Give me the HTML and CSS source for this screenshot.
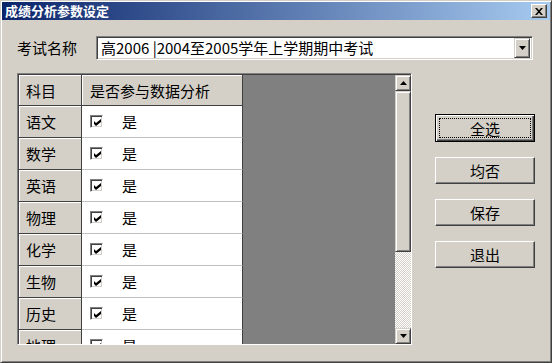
FILE: index.html
```html
<!DOCTYPE html>
<html lang="zh-CN">
<head>
<meta charset="utf-8">
<title>成绩分析参数设定</title>
<link rel="stylesheet" href="styles.css">
</head>
<body>
<div class="window">
  <div class="titlebar">
    <span class="title">成绩分析参数设定</span>
    <span class="close">
      <svg width="8" height="7" viewBox="0 0 8 7"><path d="M0 0h2l2 2.2L6 0h2L5 3.5 8 7H6L4 4.8 2 7H0l3-3.5z" fill="#000"/></svg>
    </span>
  </div>
  <div class="content">
    <div class="exam-row">
      <span class="label">考试名称</span>
      <div class="combo">
        <span class="combo-text">高2006 |2004至2005学年上学期期中考试</span>
        <span class="combo-btn"><svg width="7" height="4" viewBox="0 0 7 4"><path d="M0 0h7L3.5 4z" fill="#000"/></svg></span>
      </div>
    </div>
    <div class="main">
      <div class="grid">
        <div class="table">
          <div class="row head"><div class="c1">科目</div><div class="c2">是否参与数据分析</div></div>
          <div class="row"><div class="c1">语文</div><div class="c2"><span class="chk"><svg width="7" height="7" viewBox="0 0 7 7"><path d="M0 2l2 2 5-4v3L2 7 0 5z" fill="#000"/></svg></span><span class="yes">是</span></div></div>
          <div class="row"><div class="c1">数学</div><div class="c2"><span class="chk"><svg width="7" height="7" viewBox="0 0 7 7"><path d="M0 2l2 2 5-4v3L2 7 0 5z" fill="#000"/></svg></span><span class="yes">是</span></div></div>
          <div class="row"><div class="c1">英语</div><div class="c2"><span class="chk"><svg width="7" height="7" viewBox="0 0 7 7"><path d="M0 2l2 2 5-4v3L2 7 0 5z" fill="#000"/></svg></span><span class="yes">是</span></div></div>
          <div class="row"><div class="c1">物理</div><div class="c2"><span class="chk"><svg width="7" height="7" viewBox="0 0 7 7"><path d="M0 2l2 2 5-4v3L2 7 0 5z" fill="#000"/></svg></span><span class="yes">是</span></div></div>
          <div class="row"><div class="c1">化学</div><div class="c2"><span class="chk"><svg width="7" height="7" viewBox="0 0 7 7"><path d="M0 2l2 2 5-4v3L2 7 0 5z" fill="#000"/></svg></span><span class="yes">是</span></div></div>
          <div class="row"><div class="c1">生物</div><div class="c2"><span class="chk"><svg width="7" height="7" viewBox="0 0 7 7"><path d="M0 2l2 2 5-4v3L2 7 0 5z" fill="#000"/></svg></span><span class="yes">是</span></div></div>
          <div class="row"><div class="c1">历史</div><div class="c2"><span class="chk"><svg width="7" height="7" viewBox="0 0 7 7"><path d="M0 2l2 2 5-4v3L2 7 0 5z" fill="#000"/></svg></span><span class="yes">是</span></div></div>
          <div class="row"><div class="c1">地理</div><div class="c2"><span class="chk"><svg width="7" height="7" viewBox="0 0 7 7"><path d="M0 2l2 2 5-4v3L2 7 0 5z" fill="#000"/></svg></span><span class="yes">是</span></div></div>
        </div>
        <div class="empty"></div>
        <div class="vscroll">
          <span class="sbtn"><svg width="7" height="4" viewBox="0 0 7 4"><path d="M3.5 0L7 4H0z" fill="#000"/></svg></span>
          <span class="thumb"></span>
          <span class="track"></span>
          <span class="sbtn"><svg width="7" height="4" viewBox="0 0 7 4"><path d="M0 0h7L3.5 4z" fill="#000"/></svg></span>
        </div>
      </div>
      <div class="buttons">
        <button class="btn default"><span class="focus">全选</span></button>
        <button class="btn">均否</button>
        <button class="btn">保存</button>
        <button class="btn">退出</button>
      </div>
    </div>
  </div>
</div>
</body>
</html>
```

FILE: styles.css
```css
* { box-sizing: border-box; }
html, body { margin: 0; padding: 0; }
body {
  width: 552px;
  height: 363px;
  overflow: hidden;
  background: #d4d0c8;
  font-family: "Noto Sans CJK SC", "Liberation Sans", sans-serif;
  color: #000;
}
.window {
  width: 552px;
  height: 363px;
  background: #d4d0c8;
  border: 1px solid;
  border-color: #d4d0c8 #404040 #404040 #d4d0c8;
  box-shadow: inset 1px 1px #fff, inset -1px -1px #808080;
  padding: 1px;
  display: flex;
  flex-direction: column;
}
.titlebar {
  height: 18px;
  background: linear-gradient(to right, #0a246a, #a6caf0);
  display: flex;
  align-items: center;
  justify-content: space-between;
  padding: 0 3px 0 3px;
}
.title {
  color: #fff;
  font-weight: bold;
  font-size: 13px;
  line-height: 18px;
}
.close {
  width: 16px;
  height: 14px;
  background: #d4d0c8;
  border: 1px solid;
  border-color: #fff #404040 #404040 #fff;
  box-shadow: inset -1px -1px #808080;
  display: flex;
  align-items: center;
  justify-content: center;
  padding-right: 1px;
}
.close svg { display: block; }
.content {
  padding: 16px 0 0 15px;
}
.exam-row {
  display: flex;
  align-items: center;
  height: 24px;
}
.label {
  width: 79px;
  font-size: 15px;
  line-height: 24px;
}
.combo {
  width: 437px;
  height: 24px;
  background: #fff;
  border: 1px solid;
  border-color: #808080 #fff #fff #808080;
  box-shadow: inset 1px 1px #404040, inset -1px -1px #d4d0c8;
  padding: 2px;
  display: flex;
  align-items: center;
}
.combo-text {
  flex: 1;
  font-size: 15px;
  line-height: 20px;
  padding-left: 2px;
  white-space: nowrap;
}
.combo-btn {
  width: 16px;
  height: 20px;
  background: #d4d0c8;
  border: 1px solid;
  border-color: #d4d0c8 #404040 #404040 #d4d0c8;
  box-shadow: inset 1px 1px #fff, inset -1px -1px #808080;
  display: flex;
  align-items: center;
  justify-content: center;
}
.combo-btn svg, .sbtn svg, .chk svg { display: block; }
.main {
  display: flex;
  margin-top: 13px;
  gap: 23px;
}
.grid {
  width: 395px;
  height: 272px;
  border: 1px solid;
  border-color: #808080 #fff #fff #808080;
  box-shadow: inset 1px 1px #404040;
  padding: 1px 0 0 1px;
  display: flex;
  overflow: hidden;
}
.table {
  width: 224px;
  display: flex;
  flex-direction: column;
  overflow: hidden;
}
.row {
  display: flex;
  height: 32px;
  flex: none;
}
.row.head { height: 31px; }
.c1 {
  width: 63px;
  background: #d4d0c8;
  border-right: 1px solid #404040;
  border-bottom: 1px solid #404040;
  box-shadow: inset 1px 1px #fff;
  font-size: 15px;
  display: flex;
  align-items: center;
  padding-left: 7px;
}
.c2 {
  width: 161px;
  background: #fff;
  border-right: 1px solid #404040;
  border-bottom: 1px solid #c0c0c0;
  font-size: 15px;
  display: flex;
  align-items: center;
  padding-left: 8px;
}
.head .c2 {
  background: #d4d0c8;
  border-bottom-color: #404040;
  box-shadow: inset 1px 1px #fff;
}
.chk {
  width: 13px;
  height: 13px;
  background: #fff;
  border: 1px solid;
  border-color: #808080 #fff #fff #808080;
  box-shadow: inset 1px 1px #404040, inset -1px -1px #d4d0c8;
  display: flex;
  align-items: center;
  justify-content: center;
  padding: 1px 0 0 1px;
}
.yes { margin-left: 19px; }
.empty {
  flex: 1;
  background: #808080;
}
.vscroll {
  width: 16px;
  display: flex;
  flex-direction: column;
}
.sbtn, .thumb {
  background: #d4d0c8;
  border: 1px solid;
  border-color: #d4d0c8 #404040 #404040 #d4d0c8;
  box-shadow: inset 1px 1px #fff, inset -1px -1px #808080;
}
.sbtn {
  height: 16px;
  display: flex;
  align-items: center;
  justify-content: center;
  flex: none;
}
.thumb { height: 161px; flex: none; }
.track {
  flex: 1;
  background: repeating-conic-gradient(#fff 0 25%, #d4d0c8 0 50%) 0 0 / 2px 2px;
}
.buttons {
  display: flex;
  flex-direction: column;
  gap: 15px;
  margin-top: 41px;
}
.btn {
  width: 100px;
  height: 27px;
  font-family: inherit;
  font-size: 15px;
  color: #000;
  background: #d4d0c8;
  border: 1px solid;
  border-color: #fff #404040 #404040 #fff;
  box-shadow: inset -1px -1px #808080;
  padding: 0;
  display: flex;
  align-items: center;
  justify-content: center;
}
.btn.default {
  height: 28px;
  border: 1px solid #000;
  box-shadow: inset 1px 1px #fff, inset -1px -1px #404040, inset -2px -2px #808080;
  padding: 3px;
}
.focus {
  flex: 1;
  align-self: stretch;
  border: 1px dotted #000;
  display: flex;
  align-items: center;
  justify-content: center;
}
```
